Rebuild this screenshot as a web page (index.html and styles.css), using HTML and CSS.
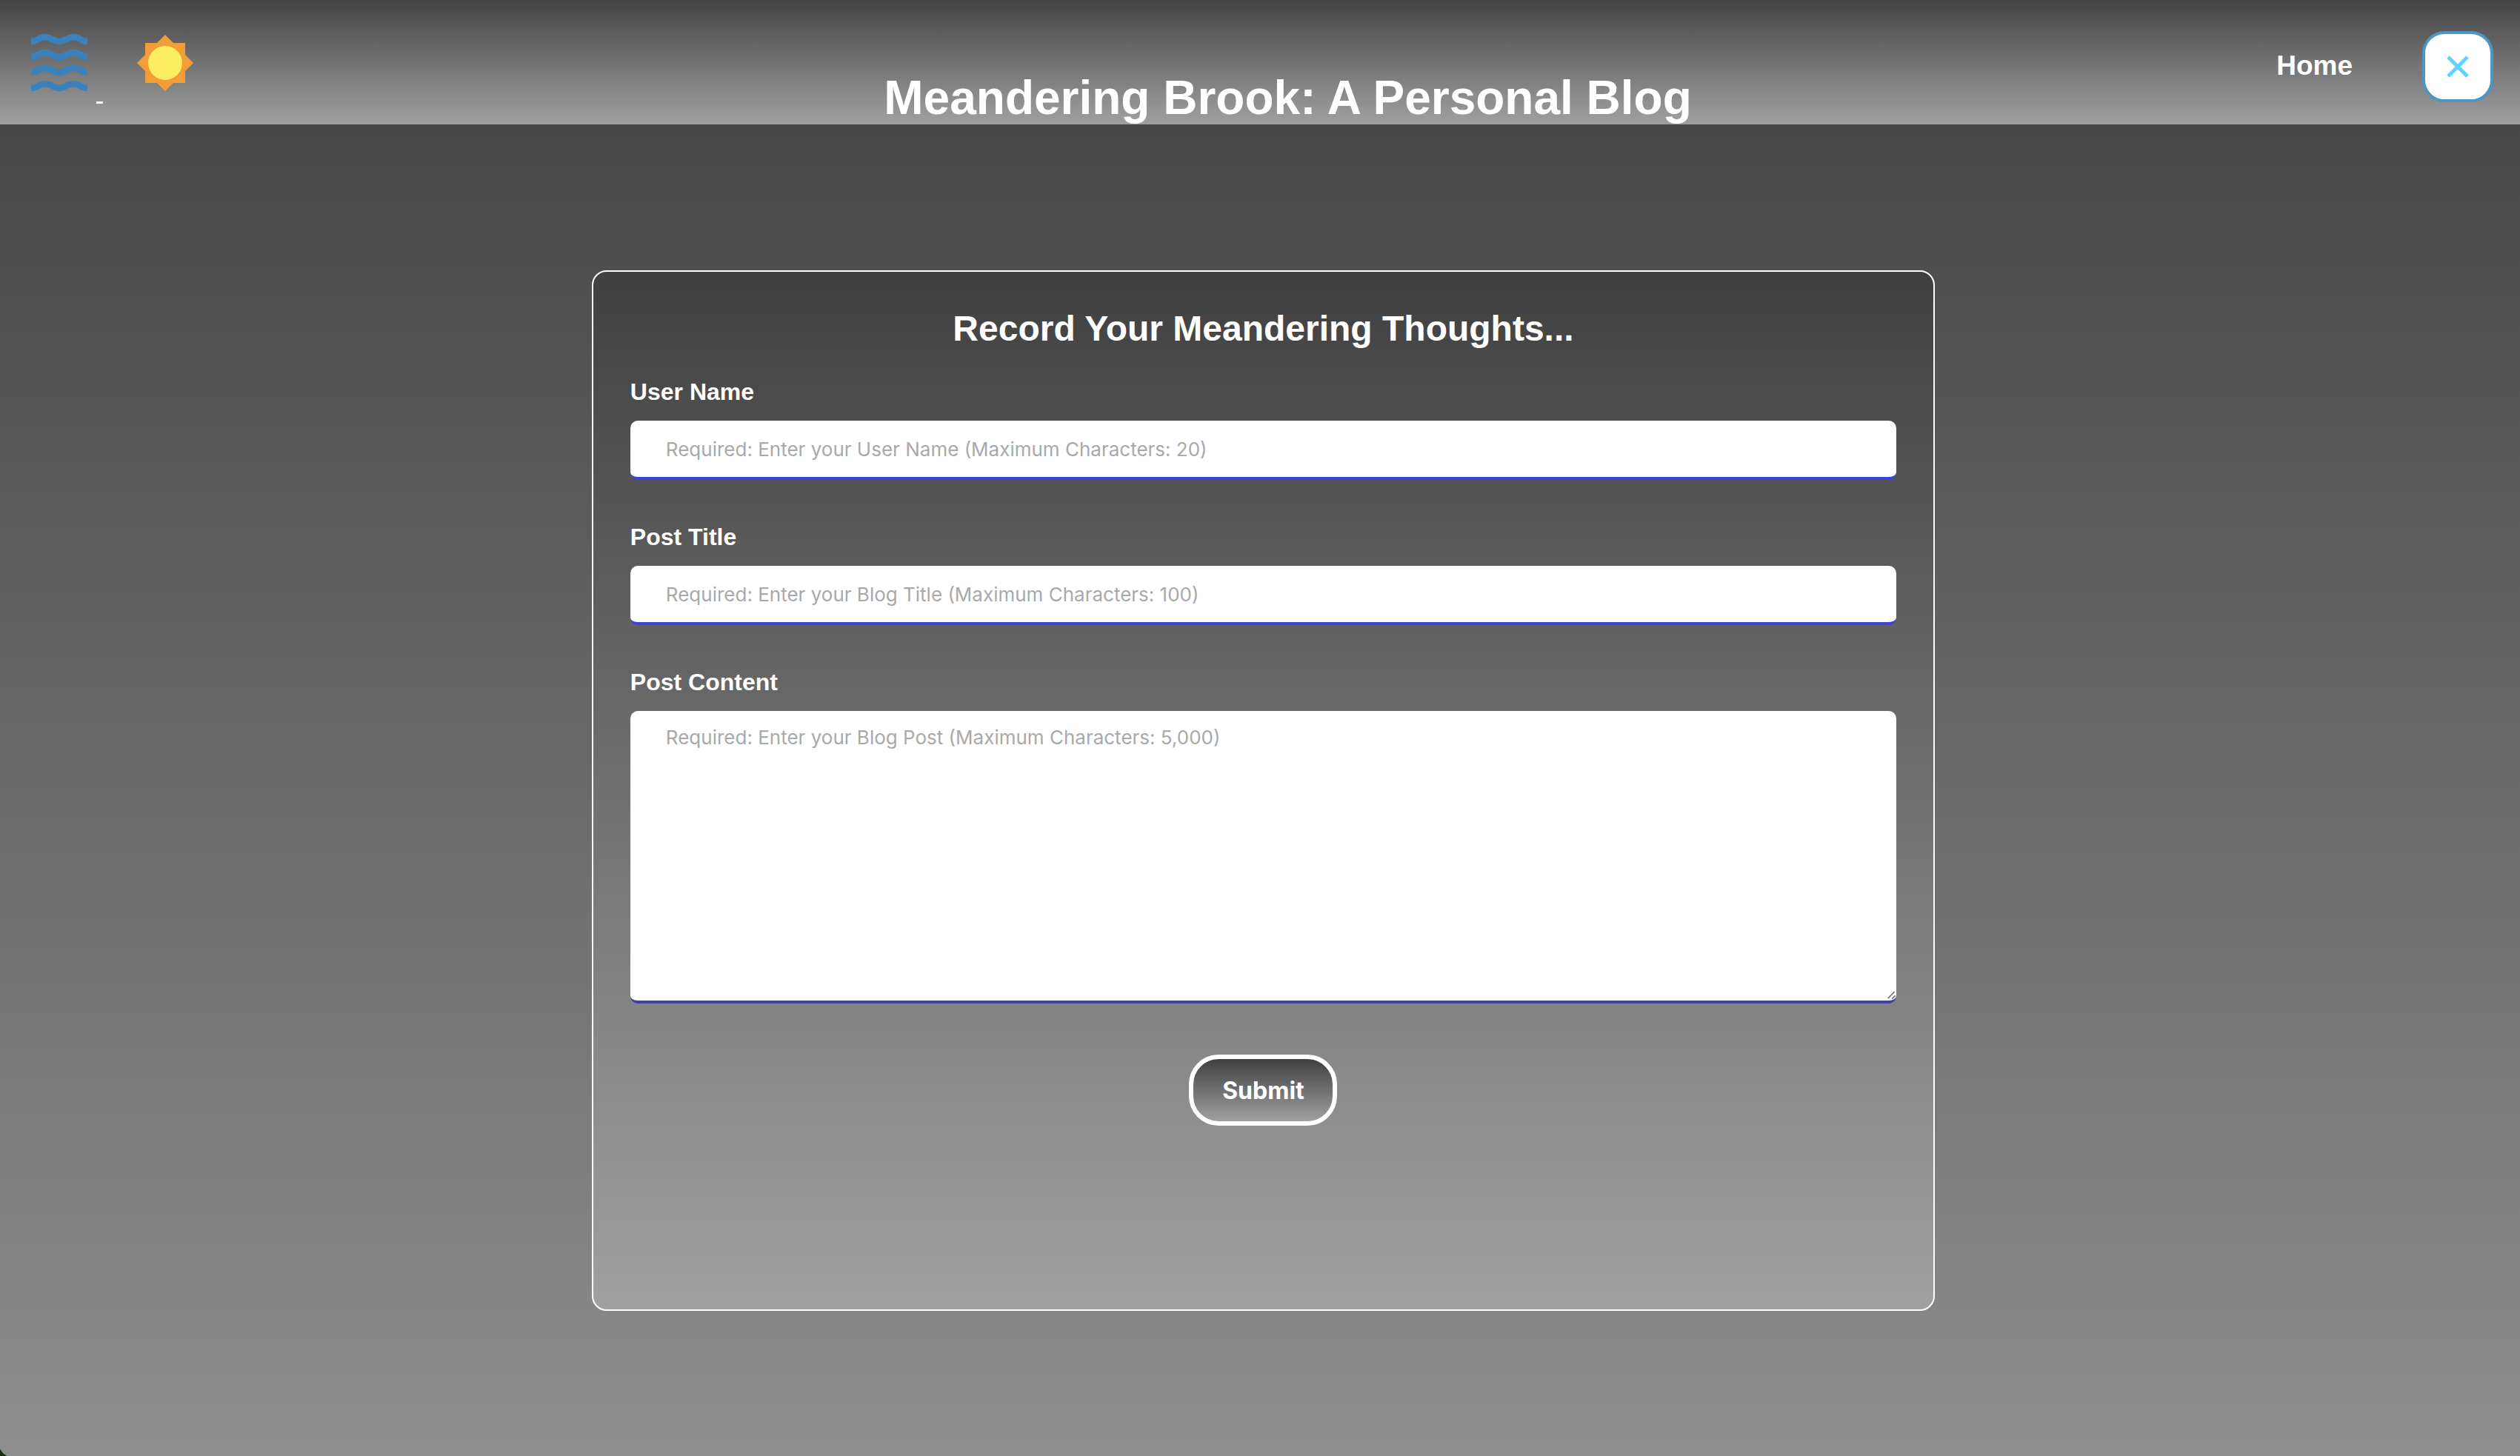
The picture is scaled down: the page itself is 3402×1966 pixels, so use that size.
FILE: index.html
```html
<!DOCTYPE html>
<html lang="en">
<head>
<meta charset="utf-8">
<meta name="viewport" content="width=device-width, initial-scale=1">
<title>Meandering Brook: A Personal Blog</title>
<link rel="stylesheet" href="styles.css">
</head>
<body>
<header class="site-header">
  <div class="brand">
    <a class="logo" href="#" aria-label="Meandering Brook"><svg class="brand-icon" viewBox="0 0 100 100" aria-hidden="true"><g fill="none" stroke="#3b82bd" stroke-width="8.5"><path d="M12 22C19 22 23 16 31 16S43 22 50 22S61 16 69 16S81 22 88 22"/><path d="M12 43C19 43 23 37 31 37S43 43 50 43S61 37 69 37S81 43 88 43"/><path d="M12 64C19 64 23 58 31 58S43 64 50 64S61 58 69 58S81 64 88 64"/><path d="M12 85C19 85 23 79 31 79S43 85 50 85S61 79 69 79S81 85 88 85"/></g></svg>&nbsp;</a>
    <svg class="brand-icon" viewBox="0 0 100 100" aria-hidden="true"><path fill="#f19e38" d="M23 24H77V78H23ZM50 13L88 51L50 89L12 51Z"/><circle cx="50" cy="51" r="23" fill="#fcec60"/></svg>
  </div>
  <h1 class="site-title">Meandering Brook: A Personal Blog</h1>
  <nav class="site-nav">
    <a class="nav-link" href="#">Home</a>
    <button class="close-button" type="button" aria-label="Close"><svg class="close-icon" viewBox="0 0 30 30" aria-hidden="true"><path d="M2 2L28 28M28 2L2 28" stroke="#60d2fc" stroke-width="5"/></svg></button>
  </nav>
</header>
<main class="page">
  <form class="post-form">
    <h2 class="form-title">Record Your Meandering Thoughts...</h2>
    <div class="field">
      <label for="user-name">User Name</label>
      <input class="control" id="user-name" type="text" maxlength="20" placeholder="Required: Enter your User Name (Maximum Characters: 20)">
    </div>
    <div class="field">
      <label for="post-title">Post Title</label>
      <input class="control" id="post-title" type="text" maxlength="100" placeholder="Required: Enter your Blog Title (Maximum Characters: 100)">
    </div>
    <div class="field">
      <label for="post-content">Post Content</label>
      <textarea class="control control-area" id="post-content" maxlength="5000" placeholder="Required: Enter your Blog Post (Maximum Characters: 5,000)"></textarea>
    </div>
    <button class="submit-button" type="submit">Submit</button>
  </form>
</main>
</body>
</html>
```

FILE: styles.css
```css
* {
  box-sizing: border-box;
}

body {
  position: relative;
  margin: 0;
  min-height: 100vh;
  background: linear-gradient(#404040, #8e8e8e);
  color: #fff;
  font-family: "Liberation Sans", Arial, sans-serif;
  font-size: 32px;
}

/* rounded corner of the window frame */
body::after {
  content: "";
  position: absolute;
  left: 0;
  bottom: 0;
  width: 20px;
  height: 20px;
  background: radial-gradient(circle at 100% 0, transparent 22px, #1c2a14 23px);
}

.site-header {
  display: flex;
  align-items: center;
  justify-content: space-between;
  min-height: 168px;
  padding: 0 36px 0 30px;
  background: linear-gradient(#444, #a0a0a0);
}

.brand {
  display: flex;
  align-items: center;
  gap: 34px;
  padding-right: 131px;
}

.logo {
  display: flex;
  align-items: flex-end;
  color: #fff;
  line-height: 20px;
  text-decoration: underline;
}

.brand-icon {
  display: block;
  width: 100px;
  height: 100px;
}

.site-title {
  align-self: flex-end;
  margin: 0;
  font-size: 64px;
  line-height: 72px;
}

.site-nav {
  display: flex;
  align-items: center;
  gap: 94px;
  padding-top: 12px;
}

.nav-link {
  padding-bottom: 3px;
  color: #fff;
  font-size: 37px;
  font-weight: bold;
  text-decoration: none;
}

.close-button {
  display: grid;
  place-items: center;
  width: 96px;
  height: 96px;
  padding: 0;
  border: 4px solid #4c96c2;
  border-radius: 30px;
  background: #fff;
}

.close-icon {
  width: 30px;
  height: 30px;
}

.page {
  display: flex;
  justify-content: center;
  padding: 197px 0 0 9px;
}

.post-form {
  display: flex;
  flex-direction: column;
  width: 53.3vw;
  padding: 49px 50px 248px;
  border: 2px solid #fff;
  border-radius: 20px;
  background: linear-gradient(#404040, #a0a0a0);
}

.form-title {
  margin: 0 0 40px;
  font-size: 48px;
  line-height: 56px;
  text-align: center;
}

.field {
  display: flex;
  flex-direction: column;
  gap: 22px;
  margin-bottom: 60px;
  font-weight: bold;
  line-height: 34px;
}

.control {
  height: 80px;
  padding: 0 48px;
  border: 0;
  border-bottom: 4px solid #4040dc;
  border-radius: 10px;
  background: #fff;
  color: #222;
  font-family: Inter, sans-serif;
  font-size: 26px;
  line-height: 32px;
}

.control::placeholder {
  color: #a9a9a9;
  opacity: 1;
}

.control-area {
  height: 395px;
  padding-top: 20px;
  border-color: #4040a0;
  resize: vertical;
}

.control-area::-webkit-scrollbar {
  width: 20px;
}

.control-area::-webkit-resizer {
  background: url("data:image/svg+xml,%3Csvg xmlns='http://www.w3.org/2000/svg' viewBox='0 0 20 20'%3E%3Cpath d='M5 16L17 4M12 17L18 11' stroke='%23666' stroke-width='2'/%3E%3C/svg%3E") no-repeat;
}

.submit-button {
  align-self: center;
  width: 200px;
  height: 96px;
  margin-top: 9px;
  padding: 0;
  border: 6px solid #fff;
  border-radius: 40px;
  background: linear-gradient(#404040, #a0a0a0) padding-box;
  color: #fff;
  font-family: Inter, sans-serif;
  font-size: 32px;
  font-weight: bold;
}
```
